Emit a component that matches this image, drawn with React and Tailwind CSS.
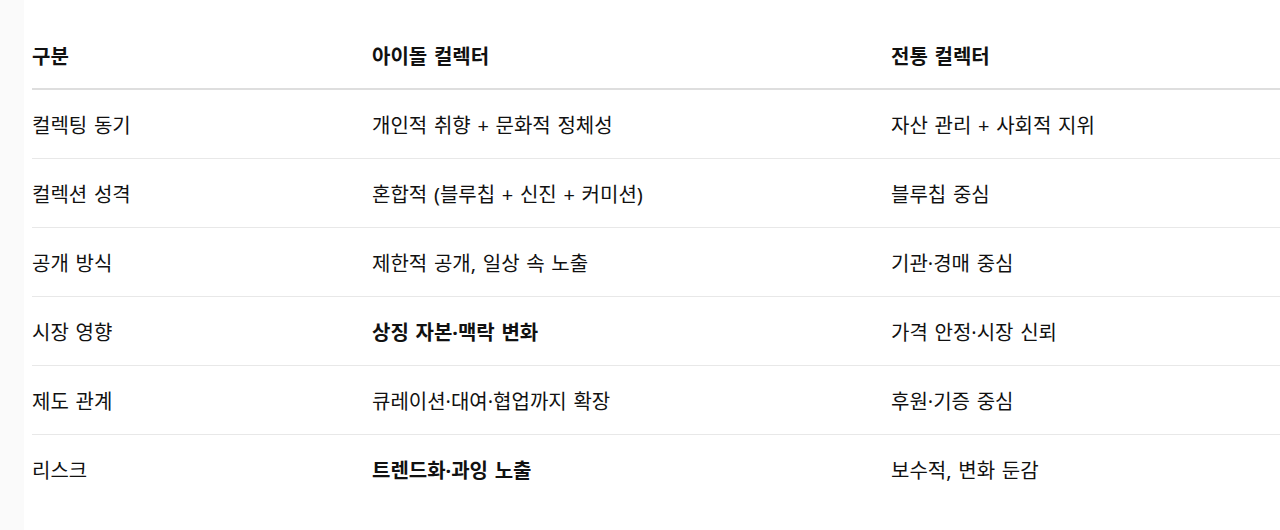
import React from "react";

const rows = [
  { label: "컬렉팅 동기", idol: "개인적 취향 + 문화적 정체성", trad: "자산 관리 + 사회적 지위" },
  { label: "컬렉션 성격", idol: "혼합적 (블루칩 + 신진 + 커미션)", trad: "블루칩 중심" },
  { label: "공개 방식", idol: "제한적 공개, 일상 속 노출", trad: "기관·경매 중심" },
  { label: "시장 영향", idol: "상징 자본·맥락 변화", trad: "가격 안정·시장 신뢰", bold: true },
  { label: "제도 관계", idol: "큐레이션·대여·협업까지 확장", trad: "후원·기증 중심" },
  { label: "리스크", idol: "트렌드화·과잉 노출", trad: "보수적, 변화 둔감", bold: true },
];

const App = () => {
  return (
    <div
      className="min-h-screen bg-white flex text-[#111] text-[20px] [word-spacing:1.5px]"
      style={{ fontFamily: '"Noto Sans", "Noto Sans CJK KR", sans-serif' }}
    >
      <div className="w-[24px] shrink-0 bg-[#fafafa]" />
      <div className="flex-1 pl-2 pt-[43px]">
        <div className="grid grid-cols-[340px_519px_1fr] font-bold border-b-2 border-[#dedede] pb-[17px] leading-[28px]">
          <div>구분</div>
          <div>아이돌 컬렉터</div>
          <div>전통 컬렉터</div>
        </div>
        {rows.map((r, i) => (
          <div
            key={r.label}
            className={
              "grid grid-cols-[340px_519px_1fr] leading-[28px] pt-[22px] pb-[18px] " +
              (i < rows.length - 1 ? "border-b border-[#e8e8e8]" : "")
            }
          >
            <div>{r.label}</div>
            <div className={r.bold ? "font-bold" : ""}>{r.idol}</div>
            <div>{r.trad}</div>
          </div>
        ))}
      </div>
    </div>
  );
};

export default App;
